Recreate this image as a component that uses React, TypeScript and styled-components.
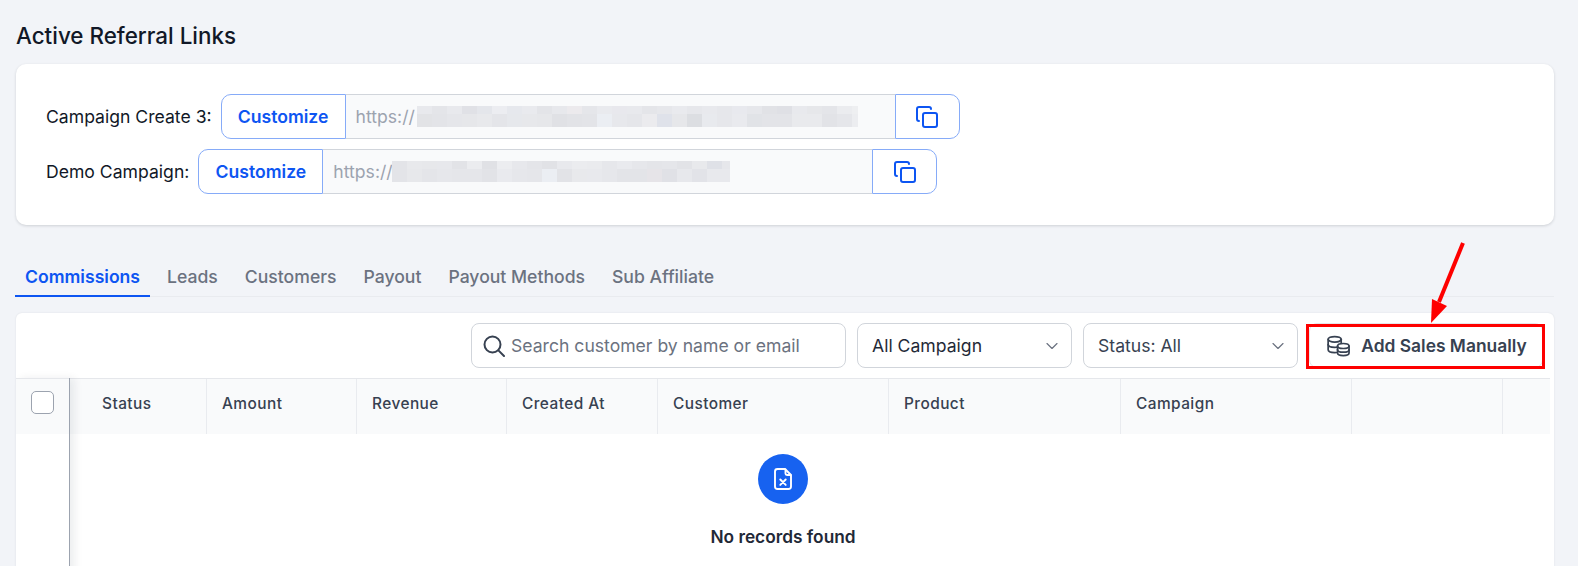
import React from "react";
import styled, { createGlobalStyle } from "styled-components";
import { ChevronDown, Copy } from "lucide-react";

const Global = createGlobalStyle`
  html, body { margin: 0; padding: 0; background: #f2f4f8; }
  body { font-family: Inter, "Noto Sans", "Liberation Sans", sans-serif; color: #111827; }
  * { box-sizing: border-box; }
`;

const Page = styled.main`
  position: relative;
  height: 566px;
  width: 1578px;
  overflow: hidden;
  padding: 21px 24px 0 16px;
  background: #f2f4f8;
`;

const Title = styled.h2`
  margin: 0 0 14px;
  height: 29px;
  font-size: 22.4px;
  line-height: 29px;
  font-weight: 500;
  color: #111827;
`;

const LinksCard = styled.section`
  display: flex;
  flex-direction: column;
  gap: 10px;
  height: 161px;
  padding: 30px;
  background: #fff;
  border-radius: 10px;
  box-shadow: 0 1px 3px rgba(17, 24, 39, 0.16);
`;

const LinkRow = styled.div`
  display: flex;
  align-items: center;
  height: 45px;
`;

const LinkLabel = styled.span`
  margin-right: 9px;
  font-size: 17.6px;
  color: #111827;
  white-space: nowrap;
`;

const CustomizeButton = styled.button`
  width: 125px;
  height: 45px;
  padding: 0;
  background: #fff;
  border: 1px solid #86abf8;
  border-radius: 10px 0 0 10px;
  font: 600 17.6px Inter, sans-serif;
  color: #0d55f2;
`;

const UrlField = styled.div`
  display: flex;
  align-items: center;
  width: 549px;
  height: 45px;
  padding-left: 10px;
  background: #f9fafb;
  border: solid #d1d5db;
  border-width: 1px 0;
  font-size: 17.6px;
  color: #9ca3af;
`;

const Mosaic = styled.svg<{ $offset: number }>`
  display: block;
  flex: none;
  margin-left: ${(p) => p.$offset}px;
`;

const CopyButton = styled.button`
  display: flex;
  align-items: center;
  justify-content: center;
  width: 65px;
  height: 45px;
  padding: 0;
  background: #fff;
  border: 1px solid #86abf8;
  border-radius: 0 10px 10px 0;
  color: #0d55f2;
`;

const TabBar = styled.nav`
  display: flex;
  gap: 7px;
  height: 42px;
  margin: 30px 0 16px -1px;
  border-bottom: 1px solid #e9ebef;
`;

const Tab = styled.div<{ $active?: boolean }>`
  height: 42px;
  padding: 11px 10px 0;
  font-size: 17.6px;
  line-height: 22px;
  font-weight: ${(p) => (p.$active ? 600 : 500)};
  color: ${(p) => (p.$active ? "#0d55f2" : "#6b7280")};
  border-bottom: 2px solid ${(p) => (p.$active ? "#0d55f2" : "transparent")};
`;

const TableCard = styled.section`
  height: 320px;
  background: #fff;
  border-radius: 6px 6px 0 0;
  box-shadow: 0 0 2px rgba(17, 24, 39, 0.1);
`;

const Toolbar = styled.div`
  display: flex;
  justify-content: flex-end;
  gap: 11px;
  height: 65px;
  padding: 10px 11px 0 0;
`;

const SearchBox = styled.div`
  display: flex;
  align-items: center;
  gap: 6px;
  width: 375px;
  height: 45px;
  padding-left: 11px;
  background: #fff;
  border: 1px solid #d1d5db;
  border-radius: 8px;
  font-size: 17.6px;
  color: #6b7280;
`;

const SelectBox = styled.div<{ $strong?: boolean }>`
  display: flex;
  align-items: center;
  justify-content: space-between;
  width: 215px;
  height: 45px;
  padding: 0 9px 0 14px;
  background: #fff;
  border: 1px solid #d1d5db;
  border-radius: 8px;
  font-size: 17.6px;
  color: ${(p) => (p.$strong ? "#1f2937" : "#374151")};
`;

const AddButton = styled.button`
  display: flex;
  align-items: center;
  justify-content: center;
  gap: 11px;
  width: 234px;
  height: 45px;
  padding: 0 0 0 2px;
  background: #fff;
  border: 1px solid #e5e7eb;
  border-radius: 8px;
  font: 600 17.4px Inter, sans-serif;
  color: #374151;
`;

const TableArea = styled.div`
  display: flex;
  width: 1534px;
  height: 255px;
`;

const StickyColumn = styled.div`
  position: relative;
  z-index: 1;
  flex: none;
  width: 54px;
  border-right: 1px solid #9ca3af;
  box-shadow: 5px 0 8px rgba(17, 24, 39, 0.07);
  background: #fff;
`;

const StickyHead = styled.div`
  height: 56px;
  padding: 12px 0 0 15px;
  background: #f9fafb;
  border-top: 1px solid #e5e7eb;
`;

const Checkbox = styled.span`
  display: block;
  width: 23px;
  height: 23px;
  background: #fff;
  border: 1px solid #9ca3af;
  border-radius: 5px;
`;

const ScrollColumn = styled.div`
  flex: 1;
  min-width: 0;
`;

const HeadRow = styled.div`
  display: flex;
  height: 56px;
  background: #f9fafb;
  border-top: 1px solid #e5e7eb;
`;

const HeadCell = styled.div<{ $w: number; $pad?: number }>`
  flex: none;
  width: ${(p) => p.$w}px;
  padding: 14px 0 0 ${(p) => p.$pad ?? 15}px;
  border-right: 1px solid #e9ebef;
  font-size: 15.4px;
  line-height: 22px;
  font-weight: 500;
  letter-spacing: 0.45px;
  color: #374151;
  &:last-child { border-right: 0; }
`;

const EmptyState = styled.div`
  display: flex;
  flex-direction: column;
  align-items: center;
  margin-left: -54px;
  padding-top: 20px;
`;

const EmptyIcon = styled.div`
  display: flex;
  align-items: center;
  justify-content: center;
  width: 50px;
  height: 50px;
  border-radius: 50%;
  background: #1762f0;
`;

const EmptyText = styled.div`
  margin-top: 21px;
  font-size: 17.3px;
  line-height: 24px;
  font-weight: 600;
  color: #1f2937;
`;

const Annotation = styled.svg`
  position: absolute;
  left: 0;
  top: 0;
  pointer-events: none;
`;

const row1Top = ["e8e9ed","e4e5e9","e8e9ed","e0e1e6","e4e6eb","ecedf1","e6e8ed","e9eaee","e3e4e8","e7e8ec","eceaed","e5e6ea","e9eaee","e8e8ed","e8e9ed","e4e5e9","e6e7eb","e9eaee","e6e7eb","e8e9ed","e6e7eb","e8e9ee","e6e7eb","e1e2e6","dfe0e5","e8e9ed","e6e7ea","e4e5e9","ebecef","eeeff1"];
const row1Bot = ["e2e3e6","e3e4e8","e5e6ea","e6e7ea","e8e9ec","e4e5e9","e6e8ec","e7e8eb","e6e7ea","e0e1e5","e2e3e7","e3e4e8","ebeef3","e7e8ec","e5e6ea","ebebee","dfe2ea","e6e7ea","dcdee2","e8eaee","e6e7eb","e9eaee","e1e3e7","e3e4e8","e3e4e8","e9eaed","e9eaed","e2e3e7","e5e6ea","ecedf0"];
const row2Top = ["e3e4e8","e8e9ec","e7e8eb","e7e8ec","e2e3e7","ebecef","e0e1e5","ecedf0","e7e8ec","e4e5e9","e1e2e6","e8e9ed","ebecef","eaebee","e6e7eb","e9eaee","e6e7eb","e4e5e9","e5e6ea","e2e3e7","e8e9ec","dfe1e7","e6e7eb"];
const row2Bot = ["e3e4e8","e7e8eb","e4e5e9","e6e7eb","e5e6ea","e5e6ea","e2e3e7","e9eaee","e6e7eb","e5e6ea","ebeef3","e2e3e7","e8e9ec","e8e9ed","e6e7eb","e3e4e8","e3e4e8","e6e4e8","e0e1e6","e7e8ec","e2e3e8","e8e9ed","e8e9ed"];

function BlurredPath({ top, bottom, width, offset }: { top: string[]; bottom: string[]; width: number; offset: number }) {
  return (
    <Mosaic $offset={offset} width={width} height={21} viewBox={`0 0 ${width} 21`} shapeRendering="crispEdges" aria-hidden>
      {top.map((c, i) => <rect key={`t${i}`} x={i * 15} y={0} width={15} height={8} fill={`#${c}`} />)}
      {bottom.map((c, i) => <rect key={`b${i}`} x={i * 15} y={8} width={15} height={13} fill={`#${c}`} />)}
    </Mosaic>
  );
}

function SearchGlyph() {
  return (
    <svg width="22" height="22" viewBox="0 0 22 22" fill="none" stroke="#374151" strokeWidth="2" strokeLinecap="round">
      <circle cx="9.5" cy="9.5" r="8" />
      <path d="M15.4 15.4 21 21" />
    </svg>
  );
}

function CoinsGlyph() {
  return (
    <svg width="23" height="22" viewBox="0 0 24 22" fill="none" stroke="#374151" strokeWidth="1.8" strokeLinecap="round" strokeLinejoin="round">
      <ellipse cx="8" cy="4" rx="6.8" ry="2.9" />
      <path d="M1.2 4v11c0 1.6 3 2.9 6.8 2.9.7 0 1.4 0 2-.1" />
      <path d="M1.2 9.5c0 1.6 3 2.9 6.8 2.9.7 0 1.4 0 2-.1" />
      <path d="M14.8 4v4" />
      <ellipse cx="17" cy="11" rx="6" ry="2.6" />
      <path d="M11 11v7.4c0 1.4 2.7 2.6 6 2.6s6-1.2 6-2.6V11" />
      <path d="M11 14.8c0 1.4 2.7 2.6 6 2.6s6-1.2 6-2.6" />
    </svg>
  );
}

function FileXGlyph() {
  return (
    <svg width="20" height="24" viewBox="0 0 20 24" fill="none" stroke="#fff" strokeWidth="1.9" strokeLinecap="round" strokeLinejoin="round">
      <path d="M12 2H4.5A2.5 2.5 0 0 0 2 4.5v15A2.5 2.5 0 0 0 4.5 22h11a2.5 2.5 0 0 0 2.5-2.5V8z" />
      <path d="M12.5 2.5v4a1.5 1.5 0 0 0 1.5 1.5h3.5" />
      <path d="m7.3 12.5 5.4 5.4M12.7 12.5l-5.4 5.4" />
    </svg>
  );
}

const columns: { label: string; w: number; pad?: number }[] = [
  { label: "Status", w: 137, pad: 32 },
  { label: "Amount", w: 150 },
  { label: "Revenue", w: 150 },
  { label: "Created At", w: 151 },
  { label: "Customer", w: 231 },
  { label: "Product", w: 232 },
  { label: "Campaign", w: 231 },
  { label: "", w: 151 },
  { label: "", w: 47 },
];

const tabs = ["Commissions", "Leads", "Customers", "Payout", "Payout Methods", "Sub Affiliate"];

export default function App() {
  return (
    <Page>
      <Global />
      <Title>Active Referral Links</Title>
      <LinksCard>
        <LinkRow>
          <LinkLabel>Campaign Create 3:</LinkLabel>
          <CustomizeButton>Customize</CustomizeButton>
          <UrlField>
            https://
            <BlurredPath top={row1Top} bottom={row1Bot} width={441} offset={2} />
          </UrlField>
          <CopyButton><Copy size={24} strokeWidth={2} /></CopyButton>
        </LinkRow>
        <LinkRow>
          <LinkLabel>Demo Campaign:</LinkLabel>
          <CustomizeButton>Customize</CustomizeButton>
          <UrlField>
            https://
            <BlurredPath top={row2Top} bottom={row2Bot} width={338} offset={-1} />
          </UrlField>
          <CopyButton><Copy size={24} strokeWidth={2} /></CopyButton>
        </LinkRow>
      </LinksCard>

      <TabBar>
        {tabs.map((t, i) => <Tab key={t} $active={i === 0}>{t}</Tab>)}
      </TabBar>

      <TableCard>
        <Toolbar>
          <SearchBox><SearchGlyph />Search customer by name or email</SearchBox>
          <SelectBox $strong>All Campaign<ChevronDown size={20} strokeWidth={1.4} color="#6b7280" /></SelectBox>
          <SelectBox>Status: All<ChevronDown size={20} strokeWidth={1.4} color="#6b7280" /></SelectBox>
          <AddButton><CoinsGlyph />Add Sales Manually</AddButton>
        </Toolbar>
        <TableArea>
          <StickyColumn>
            <StickyHead><Checkbox /></StickyHead>
          </StickyColumn>
          <ScrollColumn>
            <HeadRow>
              {columns.map((c, i) => <HeadCell key={i} $w={c.w} $pad={c.pad}>{c.label}</HeadCell>)}
            </HeadRow>
            <EmptyState>
              <EmptyIcon><FileXGlyph /></EmptyIcon>
              <EmptyText>No records found</EmptyText>
            </EmptyState>
          </ScrollColumn>
        </TableArea>
      </TableCard>

      <Annotation width="1578" height="566" viewBox="0 0 1578 566" aria-hidden>
        <rect x="1307.5" y="325.5" width="236" height="42" fill="none" stroke="#fe0000" strokeWidth="3" />
        <path d="M1463 243 1439 302" stroke="#fe0000" strokeWidth="4" fill="none" />
        <path d="M1431 323 1432 299 1447 306z" fill="#fe0000" />
      </Annotation>
    </Page>
  );
}
